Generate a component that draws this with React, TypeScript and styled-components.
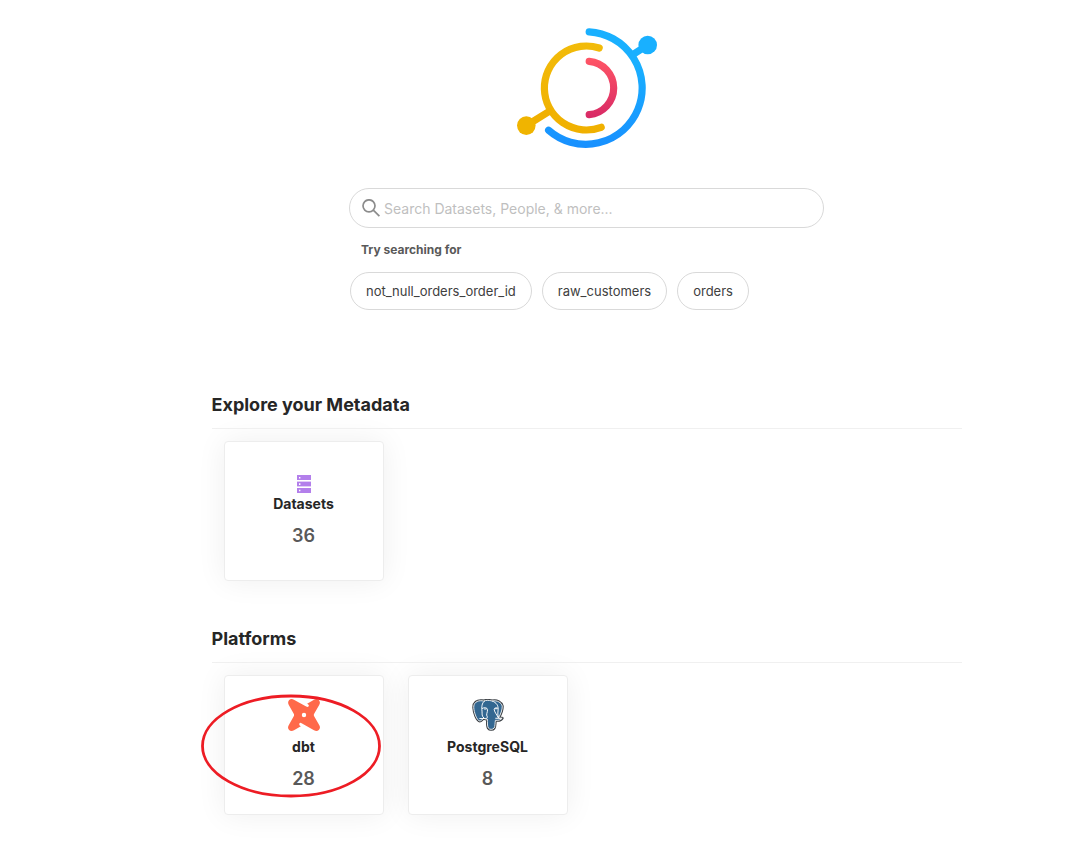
import React from "react";
import styled, { createGlobalStyle } from "styled-components";

const GlobalStyle = createGlobalStyle`
  * { box-sizing: border-box; }
  body {
    margin: 0;
    background: #ffffff;
    color: #262626;
    font-family: Inter, "Liberation Sans", sans-serif;
    font-size: 14px;
    line-height: 22px;
  }
`;

const Page = styled.div`
  display: flex;
  flex-direction: column;
  align-items: center;
  padding: 28px 0 27px 84px;
`;

const Hero = styled.header`
  display: flex;
  flex-direction: column;
  align-items: center;
  gap: 40px;
  width: 100%;
`;

const LogoDrawing = styled.svg`
  display: block;
  width: 140px;
  height: 120px;
`;

const SearchArea = styled.div`
  width: 100%;
  max-width: 475px;
`;

const SearchBox = styled.label`
  display: flex;
  align-items: center;
  gap: 4px;
  height: 40px;
  padding: 0 12px;
  border: 1px solid #d9d9d9;
  border-radius: 20px;
`;

const SearchInput = styled.input`
  flex: 1;
  min-width: 0;
  padding: 2px 0 0;
  border: 0;
  outline: 0;
  background: transparent;
  color: #262626;
  font: inherit;
  &::placeholder {
    color: #bfbfbf;
    opacity: 1;
  }
`;

const Hint = styled.p`
  margin: 11px 12px;
  color: #595959;
  font-size: 12px;
  font-weight: 700;
`;

const Chips = styled.div`
  display: flex;
  flex-wrap: wrap;
  gap: 10px;
  padding-left: 1px;
`;

const Chip = styled.button`
  height: 38px;
  padding: 0 15px;
  border: 1px solid #d9d9d9;
  border-radius: 19px;
  background: #ffffff;
  color: #404040;
  font: inherit;
  font-size: 13px;
  cursor: pointer;
`;

const Main = styled.main`
  display: flex;
  flex-direction: column;
  gap: 43px;
  width: 100%;
  max-width: 750px;
  margin-top: 80px;
`;

const SectionTitle = styled.h2`
  margin: 0 0 12px;
  padding-bottom: 9px;
  border-bottom: 1px solid #f0f0f0;
  font-size: 18px;
  font-weight: 700;
  line-height: 29px;
`;

const CardRow = styled.div`
  display: flex;
  flex-wrap: wrap;
  gap: 24px;
  padding: 0 12px;
`;

const CardSlot = styled.div`
  position: relative;
`;

const Card = styled.button`
  display: flex;
  flex-direction: column;
  align-items: center;
  justify-content: center;
  width: 160px;
  height: 140px;
  padding: 0;
  border: 1px solid #ededed;
  border-radius: 4px;
  background: #ffffff;
  box-shadow: 0 0 30px 0 #efefef;
  color: #262626;
  font: inherit;
  cursor: pointer;
`;

const CardName = styled.span<{ $spaced?: boolean }>`
  margin-top: ${(p) => (p.$spaced ? 5 : 0)}px;
  font-weight: 700;
`;

const CardCount = styled.span`
  margin-top: 9px;
  color: #595959;
  font-size: 18px;
  font-weight: 600;
  line-height: 24px;
`;

const Icon = styled.svg`
  display: block;
  flex: none;
`;

const Annotation = styled.svg`
  position: absolute;
  top: 19px;
  left: -24px;
  width: 182px;
  height: 104px;
  pointer-events: none;
`;

function Logo() {
  return (
    <LogoDrawing viewBox="0 0 140 120" role="img" aria-label="DataHub" fill="none" strokeWidth="7.2" strokeLinecap="round">
      <defs>
        <linearGradient id="blue" gradientUnits="userSpaceOnUse" x1="0" y1="0" x2="0" y2="120">
          <stop offset="0.3" stopColor="#19b0ff" />
          <stop offset="1" stopColor="#1890ff" />
        </linearGradient>
        <linearGradient id="red" gradientUnits="userSpaceOnUse" x1="0" y1="30" x2="0" y2="90">
          <stop offset="0" stopColor="#ff5565" />
          <stop offset="1" stopColor="#d82a66" />
        </linearGradient>
        <linearGradient id="gold" gradientUnits="userSpaceOnUse" x1="0" y1="14" x2="0" y2="106">
          <stop offset="0" stopColor="#f2bb0a" />
          <stop offset="1" stopColor="#f0b000" />
        </linearGradient>
      </defs>
      <path d="M72.2 3.8A56.3 56.3 0 1 1 31.6 102.2" stroke="url(#blue)" />
      <path d="M116 26.5L130.7 17" stroke="#19b0ff" />
      <circle cx="130.7" cy="17" r="9.3" fill="#19b0ff" />
      <path d="M82.2 20A42 42 0 1 0 84.2 99.3" stroke="url(#gold)" />
      <path d="M32 83.5L9.3 97.6" stroke="#f0b000" />
      <circle cx="9.3" cy="97.6" r="9.3" fill="#f0b400" />
      <path d="M72.2 33.3A26.8 26.8 0 0 1 72.2 86.7" stroke="url(#red)" />
    </LogoDrawing>
  );
}

function SearchIcon() {
  return (
    <Icon width="18" height="18" viewBox="0 0 18 18" fill="none" stroke="#8c8c8c" strokeWidth="1.7" aria-hidden="true">
      <circle cx="7" cy="6.8" r="6" />
      <path d="M11.3 11.1L17.4 17.2" />
    </Icon>
  );
}

function DatasetIcon() {
  return (
    <Icon width="14" height="18" viewBox="0 0 14 18" aria-hidden="true">
      <path fill="#e1ccf7" d="M0 0h14v18H0z" />
      <path fill="#b37feb" d="M0 0h14v5H0zM0 7h14v4H0zM0 13h14v5H0z" />
      <path fill="#ffffff" d="M0 5h14v1H0zM0 12h14v1H0z" />
      <path fill="#ffffff" d="M2 2h1.4v1.4H2zM2 8.2h1.4v1.8H2zM2 14.8h1.4v1.4H2z" />
    </Icon>
  );
}

function DbtIcon() {
  return (
    <Icon width="32" height="32" viewBox="0 0 32 32" aria-hidden="true">
      <path
        fill="#ff694a"
        fillRule="evenodd"
        d="M5.9.7L18.2 7.6Q20.6 8.8 20.9 6.6Q20.7 5 19.1 4.7L26 .7C28-.4 29.8-.2 31 1.2C32.2 2.6 32.2 4.3 31.2 6L26.3 14.4Q25.3 16 26.3 17.6L31.2 26C32.4 28.2 32.1 29.7 30.8 31C29.4 32.2 27.8 32.2 26 31.2L13.6 24.3Q11.7 23.1 11.2 25.2Q11.3 26.9 12.9 27.2L6 31.2C4.1 32.3 2.4 32.2 1.1 30.9C-.2 29.6-.3 28 .7 26.2L5.6 17.6Q6.6 16 5.6 14.4L.8 5.9C-.2 4.1-.1 2.3 1.2 1C2.5-.2 4.2-.3 5.9.7ZM16 13.8A2.2 2.2 0 1 0 16 18.2A2.2 2.2 0 0 0 16 13.8Z"
      />
    </Icon>
  );
}

const elephant =
  "M9.5 1.2C4.5.8 1 3.4 1.2 8.3C1.5 13.2 4.3 22 7.6 22.2C9 22.2 10.3 20.4 11.5 19.2C12.7 20 13.9 20.2 15.3 20.2C15.6 23.5 15 27.5 16.4 29.6C17.7 31.4 21 31.3 22.4 29.5C23.5 28 23.2 24 23.7 21.5C26.2 21.8 29.5 21.3 30.7 19.3C29.5 19.3 27.8 19.7 27 18.8C29 15.4 31 10.5 30.8 6.8C30 3 25.3.4 20.5 1.5C16.5.5 13.7.6 12 1.4Z";

function PostgresIcon() {
  return (
    <Icon width="32" height="32" viewBox="-0.6 -0.6 33.2 33.2" strokeLinecap="round" strokeLinejoin="round" aria-hidden="true">
      <path d={elephant} fill="#333d45" stroke="#3a3f44" strokeWidth="3" />
      <path d={elephant} fill="#336791" stroke="#ffffff" strokeWidth="0.9" />
      <g fill="none" stroke="#ffffff" strokeWidth="1">
        <path d="M12.4 1.6C9.4 3.3 9.3 8 9.8 12C10.1 15 9.2 17 11.6 19" />
        <path d="M10 9.2C12 7.9 15.3 8.1 15.5 10.5C15.7 13.5 13.5 15.5 15.3 17.8C15.6 19 14.4 20 12.6 19.8" />
        <path d="M20.5 1.5C25 3.4 26.5 6 26.5 9.5C26.6 13 25.5 14.5 26.8 18.5" />
        <path d="M26.3 9C24.8 8 22.5 8.6 22.4 10C22.4 12.5 25.2 15.8 26.6 18.6" />
        <path d="M12.4 9.8h1.6M23.5 9.5h1.5M7.5 19.6h4M24 19.4h5.5" />
      </g>
    </Icon>
  );
}

interface Entry {
  name: string;
  count: number;
  icon: React.ReactNode;
  spaced?: boolean;
  circled?: boolean;
}

const searches = ["not_null_orders_order_id", "raw_customers", "orders"];

const sections: { title: string; entries: Entry[] }[] = [
  { title: "Explore your Metadata", entries: [{ name: "Datasets", count: 36, icon: <DatasetIcon /> }] },
  {
    title: "Platforms",
    entries: [
      { name: "dbt", count: 28, icon: <DbtIcon />, spaced: true, circled: true },
      { name: "PostgreSQL", count: 8, icon: <PostgresIcon />, spaced: true },
    ],
  },
];

export default function App() {
  return (
    <>
      <GlobalStyle />
      <Page>
        <Hero>
          <Logo />
          <SearchArea>
            <SearchBox>
              <SearchIcon />
              <SearchInput type="text" aria-label="Search" placeholder="Search Datasets, People, & more..." />
            </SearchBox>
            <Hint>Try searching for</Hint>
            <Chips>
              {searches.map((s) => (
                <Chip key={s} type="button">{s}</Chip>
              ))}
            </Chips>
          </SearchArea>
        </Hero>
        <Main>
          {sections.map((section) => (
            <section key={section.title}>
              <SectionTitle>{section.title}</SectionTitle>
              <CardRow>
                {section.entries.map((e) => (
                  <CardSlot key={e.name}>
                    <Card type="button">
                      {e.icon}
                      <CardName $spaced={e.spaced}>{e.name}</CardName>
                      <CardCount>{e.count}</CardCount>
                    </Card>
                    {e.circled && (
                      <Annotation viewBox="0 0 182 104" aria-hidden="true">
                        <ellipse cx="91" cy="52" rx="88.5" ry="50" fill="none" stroke="#ed1c24" strokeWidth="2.8" />
                      </Annotation>
                    )}
                  </CardSlot>
                ))}
              </CardRow>
            </section>
          ))}
        </Main>
      </Page>
    </>
  );
}
